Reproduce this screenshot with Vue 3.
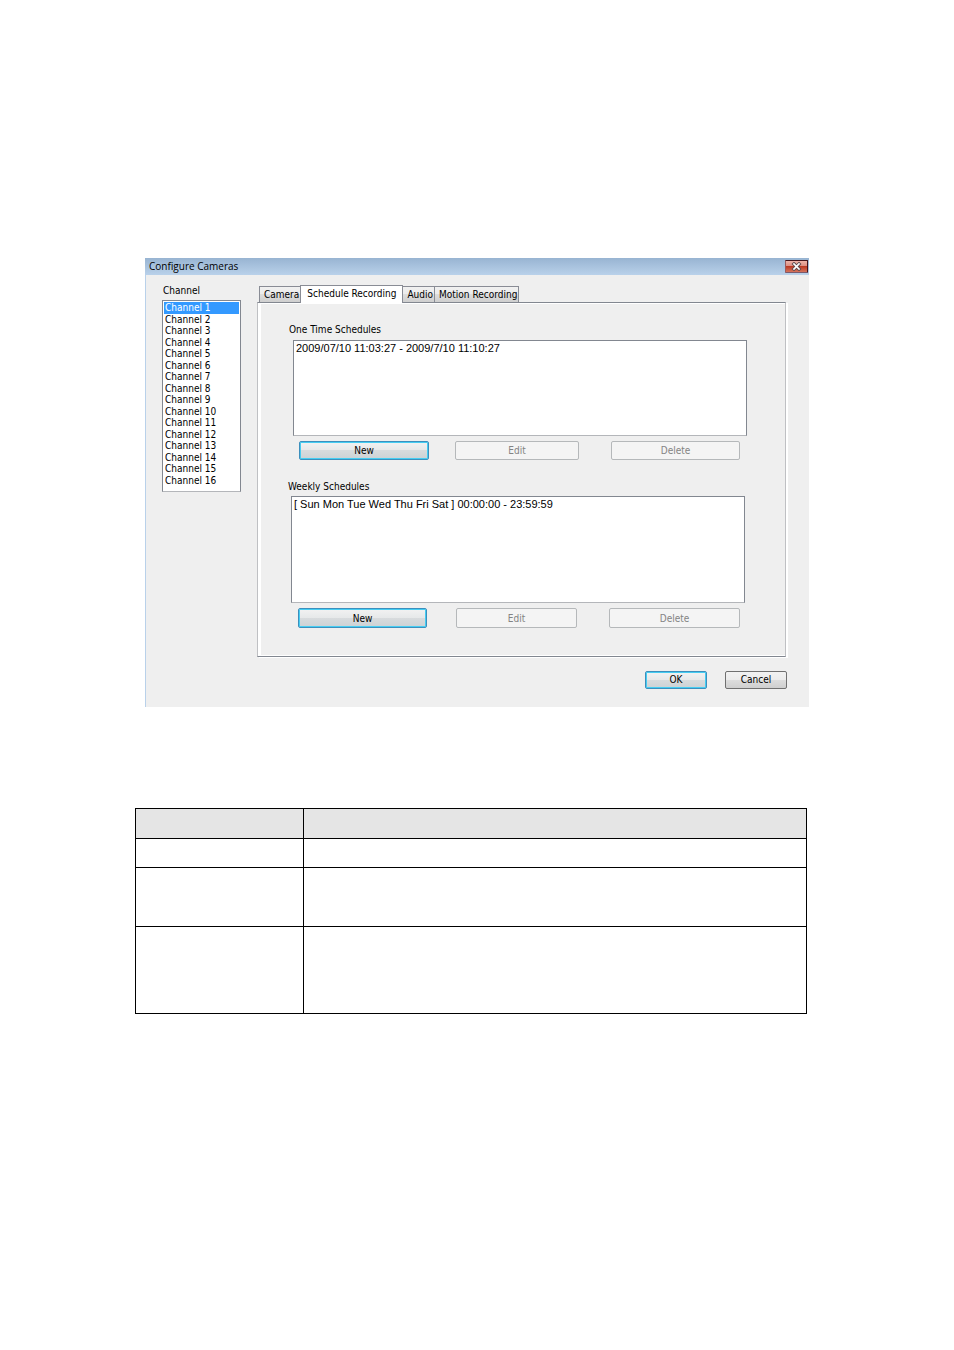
<template>
  <main class="page">
    <section class="dialog" role="dialog" aria-labelledby="dialog-title">
      <header class="titlebar">
        <h1 id="dialog-title">Configure Cameras</h1>
        <button type="button" class="close" aria-label="Close">
          <svg viewBox="0 0 11 9" width="11" height="9">
            <path d="M3 2L8 7M8 2L3 7" stroke="#5b4a4d" stroke-width="3.4" stroke-linecap="square" />
            <path d="M3 2L8 7M8 2L3 7" stroke="#fff" stroke-width="1.7" stroke-linecap="square" />
          </svg>
        </button>
      </header>

      <div class="body">
        <div class="channels">
          <label for="channel">Channel</label>
          <select id="channel" v-model="channel" class="listbox" size="16">
            <option v-for="n in 16" :key="n" :value="n">Channel {{ n }}</option>
          </select>
        </div>

        <div class="settings">
          <div class="tabs" role="tablist">
            <button v-for="tab in tabs" :key="tab" type="button" role="tab" class="tab"
              :class="{ active: tab === activeTab }" :aria-selected="tab === activeTab" @click="activeTab = tab">
              {{ tab }}
            </button>
          </div>

          <div class="panel" role="tabpanel">
            <div v-for="group in groups" :key="group.id" class="group" :class="group.id">
              <label :for="group.id">{{ group.label }}</label>
              <select :id="group.id" v-model="group.selected" class="listbox" size="8">
                <option v-for="item in group.items" :key="item" :value="item">{{ item }}</option>
              </select>
              <div class="actions">
                <button type="button" class="btn primary">New</button>
                <button type="button" class="btn" :disabled="!group.selected">Edit</button>
                <button type="button" class="btn" :disabled="!group.selected">Delete</button>
              </div>
            </div>
          </div>
        </div>
      </div>

      <footer class="footer">
        <button type="button" class="btn primary">OK</button>
        <button type="button" class="btn">Cancel</button>
      </footer>
    </section>

    <table class="description">
      <thead>
        <tr>
          <th></th>
          <th></th>
        </tr>
      </thead>
      <tbody>
        <tr v-for="size in ['one', 'two', 'three']" :key="size" :class="size">
          <td></td>
          <td></td>
        </tr>
      </tbody>
    </table>
  </main>
</template>

<script setup>
import { ref, reactive } from 'vue';

const channel = ref(1);
const tabs = ['Camera', 'Schedule Recording', 'Audio', 'Motion Recording'];
const activeTab = ref('Schedule Recording');

const groups = reactive([
  {
    id: 'one-time',
    label: 'One Time Schedules',
    items: ['2009/07/10 11:03:27 - 2009/7/10 11:10:27'],
    selected: null
  },
  {
    id: 'weekly',
    label: 'Weekly Schedules',
    items: ['[ Sun Mon Tue Wed Thu Fri Sat ] 00:00:00 - 23:59:59'],
    selected: null
  }
]);
</script>

<style>
body {
  background: #fff;
}
</style>

<style scoped>
* {
  box-sizing: border-box;
}

.page {
  padding: 258px 145px 0;
  font-family: "DejaVu Sans Condensed", "DejaVu Sans", sans-serif;
  font-size: 10px;
  line-height: 14px;
  color: #000;
}

button,
select {
  margin: 0;
  font: inherit;
  color: inherit;
}

.dialog {
  border-left: 1px solid #b9d1ea;
  background: #efefef;
}

.titlebar {
  display: flex;
  align-items: center;
  justify-content: space-between;
  height: 17px;
  margin-left: -1px;
  padding: 0 1px 0 4px;
  background: linear-gradient(#98b4d2, #b9d1ea);
}

.titlebar h1 {
  margin: 0;
  padding-bottom: 2px;
  font-family: "Open Sans", "Noto Sans", sans-serif;
  font-size: 10px;
  font-weight: 400;
}

.close {
  display: flex;
  align-items: center;
  justify-content: center;
  width: 23px;
  height: 13px;
  padding: 0;
  border: 1px solid #43141a;
  border-left-color: #9c5a5c;
  border-bottom-color: #7b5a6c;
  border-radius: 1px;
  background: linear-gradient(#eeb3a8, #dc8f82 45%, #bb3a24 50%, #d5735c);
}

.close svg {
  fill: none;
}

.body {
  display: flex;
  gap: 16px;
  padding: 9px 21px 0 16px;
}

.channels {
  display: flex;
  flex-direction: column;
  width: 79px;
}

label {
  display: block;
}

.channels label {
  padding-left: 1px;
  margin-bottom: 2px;
}

.listbox {
  display: block;
  width: 100%;
  padding: 1px;
  border: 1px solid #828790;
  border-bottom-color: #b4b6ba;
  border-radius: 0;
  background: #fff;
  overflow: hidden;
  outline: none;
}

.listbox option {
  height: 14px;
  min-height: 0;
  padding: 0 1px;
  line-height: 14px;
}

.group .listbox {
  font-family: "Liberation Sans", Arial, sans-serif;
  font-size: 11px;
}

.channels .listbox {
  height: 192px;
}

.channels option {
  height: 12px;
  line-height: 12px;
}

.channels option:nth-child(even) {
  height: 11px;
  line-height: 11px;
}

.channels option:checked {
  background: #3399ff linear-gradient(#3399ff, #3399ff);
  color: #fff;
}

.settings {
  flex: 1;
  min-width: 0;
  padding-top: 1px;
}

.tabs {
  display: flex;
  align-items: flex-end;
  height: 17px;
  padding-left: 2px;
}

.tab {
  height: 16px;
  padding: 0 1px 0 4px;
  border: 1px solid #898c95;
  border-bottom: 0;
  margin-left: -1px;
  background: linear-gradient(#f1f1f1, #ebebeb 50%, #dddddd 50%, #cfcfcf);
  line-height: 15px;
  white-space: nowrap;
}

.tab:first-child {
  margin-left: 0;
}

.tab.active {
  height: 18px;
  margin-bottom: -1px;
  padding: 0 6px 2px;
  background: #fff;
  z-index: 1;
}

.panel {
  margin-right: 2px;
  padding: 20px 38px 28px 31px;
  border: 1px solid #828790;
  border-left-color: #bfc0c3;
  border-right-color: #bfc0c3;
  box-shadow: inset 3px 1px #fff, inset 0 -1px #fff, 2px 1px #fff;
}

.group label {
  margin-bottom: 3px;
}

.group .listbox {
  width: auto;
  min-width: calc(100% - 4px);
  height: 96px;
  margin-left: 4px;
}

.weekly {
  padding-top: 20px;
}

.weekly label {
  margin: 0 0 2px -1px;
}

.weekly .listbox {
  height: 107px;
  margin-left: 2px;
}

.actions {
  display: grid;
  grid-template-columns: 156fr 156fr 129fr;
  margin-top: 5px;
  padding: 0 7px 0 10px;
}

.weekly .actions {
  grid-template-columns: 158fr 153fr 131fr;
  padding-left: 9px;
}

.btn {
  height: 19px;
  padding: 0;
  border: 1px solid #707070;
  border-radius: 2px;
  background: linear-gradient(#f2f2f2, #ebebeb 50%, #dddddd 50%, #cfcfcf);
  line-height: 17px;
}

.btn.primary {
  border-color: #3c8fbd;
  background: linear-gradient(#f2f2f2, #e6e8e9 50%, #d8dbdd 50%, #ccd2d5);
  box-shadow: inset 0 0 0 1px #46cdf2;
}

.btn:disabled {
  border-color: #b5b8ba;
  background: #f4f4f4;
  color: #838383;
}

.actions .btn:nth-child(1) {
  margin-right: 26px;
}

.actions .btn:nth-child(2) {
  margin-right: 32px;
}

.weekly .btn {
  height: 20px;
}

.weekly .btn:nth-child(1) {
  margin-right: 29px;
}

.footer {
  display: flex;
  justify-content: flex-end;
  gap: 18px;
  padding: 14px 22px 18px;
}

.footer .btn {
  width: 62px;
  height: 18px;
  line-height: 16px;
}

.description {
  width: calc(100% + 8px);
  margin: 101px 0 0 -10px;
  border-collapse: collapse;
  table-layout: fixed;
}

.description th,
.description td {
  padding: 0;
  border: 1px solid #000;
}

.description th {
  height: 30px;
  background: #e5e5e5;
}

.description th:first-child {
  width: 25%;
}

.one td {
  height: 29px;
}

.two td {
  height: 59px;
}

.three td {
  height: 87px;
}
</style>
